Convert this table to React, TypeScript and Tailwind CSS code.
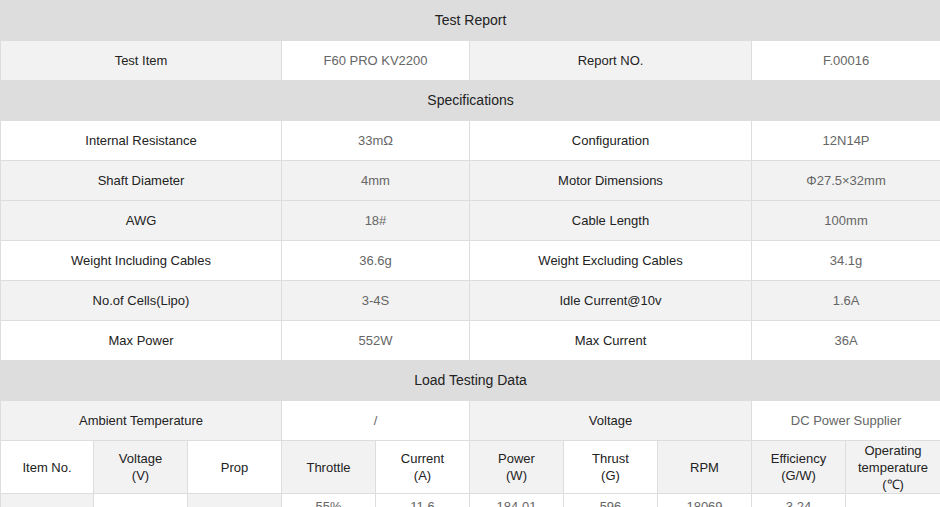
import type { ReactNode } from "react";

type Cell = { text: ReactNode; span?: number; tone: "label" | "value"; bg?: "gray" | "white" };

const font = { fontFamily: '"Liberation Sans", Arial, sans-serif' };

const specs: [string, string, string, string, boolean][] = [
  ["Internal Resistance", "33mΩ", "Configuration", "12N14P", false],
  ["Shaft Diameter", "4mm", "Motor Dimensions", "Φ27.5×32mm", true],
  ["AWG", "18#", "Cable Length", "100mm", true],
  ["Weight Including Cables", "36.6g", "Weight Excluding Cables", "34.1g", false],
  ["No.of Cells(Lipo)", "3-4S", "Idle Current@10v", "1.6A", true],
  ["Max Power", "552W", "Max Current", "36A", false],
];

const loadHead: { label: ReactNode; gray: boolean }[] = [
  { label: "Item No.", gray: false },
  { label: <>Voltage<br />(V)</>, gray: true },
  { label: "Prop", gray: false },
  { label: "Throttle", gray: true },
  { label: <>Current<br />(A)</>, gray: false },
  { label: <>Power<br />(W)</>, gray: true },
  { label: <>Thrust<br />(G)</>, gray: false },
  { label: "RPM", gray: true },
  { label: <>Efficiency<br />(G/W)</>, gray: true },
  { label: <>Operating<br />temperature<br />(℃)</>, gray: true },
];

function SectionRow({ title }: { title: string }) {
  return (
    <tr>
      <td colSpan={10} className="h-[40px] border border-[#dddddd] bg-[#dddddd] p-0 text-center text-[14px] text-[#222]">
        {title}
      </td>
    </tr>
  );
}

function Row({ cells, h = "h-[40px]" }: { cells: Cell[]; h?: string }) {
  return (
    <tr>
      {cells.map((c, i) => (
        <td
          key={i}
          colSpan={c.span}
          className={`${h} border border-[#dddddd] p-0 text-center text-[13px] ${
            c.bg === "gray" ? "bg-[#f2f2f2]" : "bg-white"
          } ${c.tone === "label" ? "text-[#222]" : "text-[#666]"}`}
        >
          {c.text}
        </td>
      ))}
    </tr>
  );
}

export default function App() {
  return (
    <div className="w-[940px] bg-white" style={font}>
      <table className="w-[940px] table-fixed border-collapse">
        <colgroup>
          <col className="w-[93px]" />
          <col className="w-[94px]" />
          <col className="w-[94px]" />
          <col className="w-[94px]" />
          <col className="w-[94px]" />
          <col className="w-[94px]" />
          <col className="w-[94px]" />
          <col className="w-[94px]" />
          <col className="w-[94px]" />
          <col className="w-[95px]" />
        </colgroup>
        <tbody>
          <SectionRow title="Test Report" />
          <Row
            cells={[
              { text: "Test Item", span: 3, tone: "label", bg: "gray" },
              { text: "F60 PRO KV2200", span: 2, tone: "value" },
              { text: "Report NO.", span: 3, tone: "label", bg: "gray" },
              { text: "F.00016", span: 2, tone: "value" },
            ]}
          />
          <SectionRow title="Specifications" />
          {specs.map(([a, b, c, d, gray]) => (
            <Row
              key={a}
              cells={[
                { text: a, span: 3, tone: "label", bg: gray ? "gray" : "white" },
                { text: b, span: 2, tone: "value", bg: gray ? "gray" : "white" },
                { text: c, span: 3, tone: "label", bg: gray ? "gray" : "white" },
                { text: d, span: 2, tone: "value", bg: gray ? "gray" : "white" },
              ]}
            />
          ))}
          <SectionRow title="Load Testing Data" />
          <Row
            cells={[
              { text: "Ambient Temperature", span: 3, tone: "label", bg: "gray" },
              { text: "/", span: 2, tone: "value" },
              { text: "Voltage", span: 3, tone: "label", bg: "gray" },
              { text: "DC Power Supplier", span: 2, tone: "value" },
            ]}
          />
          <tr>
            {loadHead.map((c, i) => (
              <td
                key={i}
                className={`h-[53px] border border-[#dddddd] p-0 text-center text-[13px] leading-[17px] text-[#222] ${
                  c.gray ? "bg-[#f2f2f2]" : "bg-white"
                }`}
              >
                {c.label}
              </td>
            ))}
          </tr>
          <Row
            h="h-[26px]"
            cells={[
              { text: "", tone: "value", bg: "gray" },
              { text: "", tone: "value" },
              { text: "", tone: "value", bg: "gray" },
              { text: "55%", tone: "value" },
              { text: "11.6", tone: "value" },
              { text: "184.01", tone: "value" },
              { text: "596", tone: "value" },
              { text: "18069", tone: "value" },
              { text: "3.24", tone: "value" },
              { text: "", tone: "value" },
            ]}
          />
        </tbody>
      </table>
    </div>
  );
}
